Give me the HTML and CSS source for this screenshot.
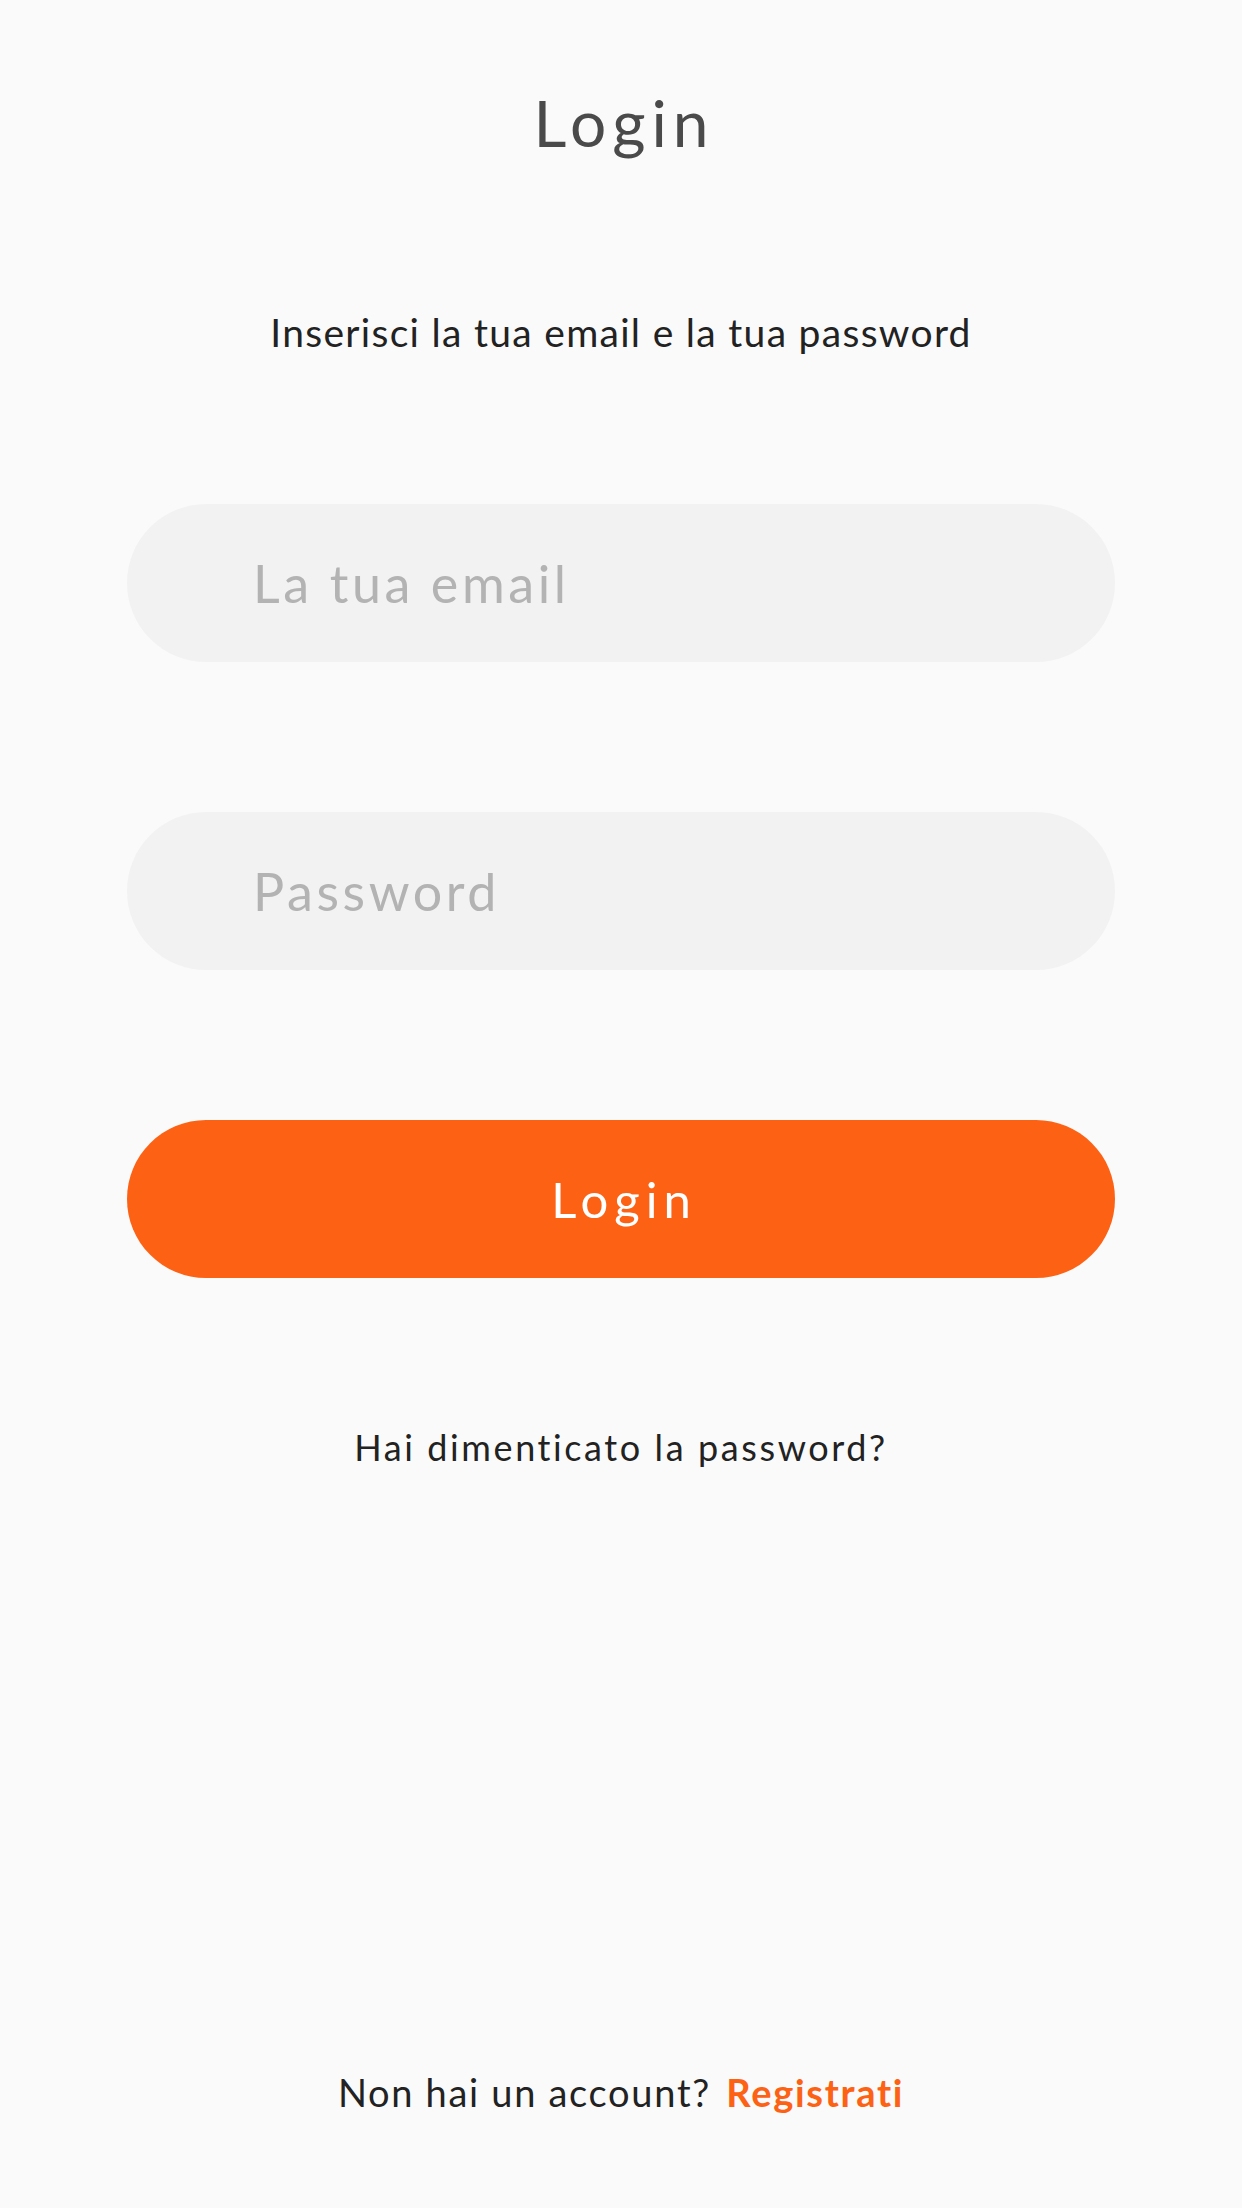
FILE: index.html
```html
<!DOCTYPE html>
<html lang="it">
<head>
  <meta charset="UTF-8" />
  <meta name="viewport" content="width=device-width, initial-scale=1.0"/>
  <title>Login</title>
  <link rel="stylesheet" href="styles.css">
</head>
<body>

<div class="page">
  <h1 class="title">Login</h1>
  <p class="subtitle">Inserisci la tua email e la tua password</p>

  <form class="login-form" id="loginForm">
    <input type="email" class="field" id="email" placeholder="La tua email" />
    <input type="password" class="field" id="password" placeholder="Password" />
    <button type="submit" class="btn">Login</button>
  </form>

  <a class="forgot" href="#">Hai dimenticato la password?</a>

  <div class="footer">
    Non hai un account? <a class="register" href="#">Registrati</a>
  </div>
</div>

</body>
</html>
```

FILE: styles.css
```css
body {
  margin: 0;
  background: #fafafa;
  font-family: Lato, "Open Sans", sans-serif;
  color: #222;
}
.page {
  min-height: 100vh;
  box-sizing: border-box;
  display: flex;
  flex-direction: column;
  align-items: center;
  padding: 85px 0 92px;
}
.title {
  margin: 0;
  font-size: 64px;
  font-weight: 400;
  line-height: 1.2;
  letter-spacing: 6px;
  text-indent: 6px;
  color: #4a4a4a;
}
.subtitle {
  margin: 147px 0 0;
  font-size: 39px;
  line-height: 1.2;
  letter-spacing: 1.3px;
  color: #222;
}
.login-form {
  margin-top: 148px;
  display: flex;
  flex-direction: column;
  gap: 150px;
}
.field {
  width: 988px;
  height: 158px;
  box-sizing: border-box;
  border: none;
  border-radius: 79px;
  background: #f2f2f2;
  padding: 0 126px;
  font-family: inherit;
  font-size: 52px;
  letter-spacing: 3.6px;
  color: #333;
  outline: none;
}
.field::placeholder {
  color: #b3b3b3;
}
.btn {
  width: 988px;
  height: 158px;
  border: none;
  border-radius: 79px;
  background: #fd6114;
  color: #fff;
  font-family: inherit;
  font-size: 49px;
  letter-spacing: 6px;
  text-indent: 6px;
  cursor: pointer;
}
.forgot {
  margin-top: 148px;
  font-size: 36px;
  line-height: 1.2;
  letter-spacing: 2.6px;
  color: #222;
  text-decoration: none;
}
.footer {
  margin-top: auto;
  font-size: 38px;
  line-height: 1.2;
  letter-spacing: 1.7px;
  color: #222;
}
.register {
  color: #fd6114;
  font-weight: bold;
  text-decoration: none;
  margin-left: 4px;
}
```
